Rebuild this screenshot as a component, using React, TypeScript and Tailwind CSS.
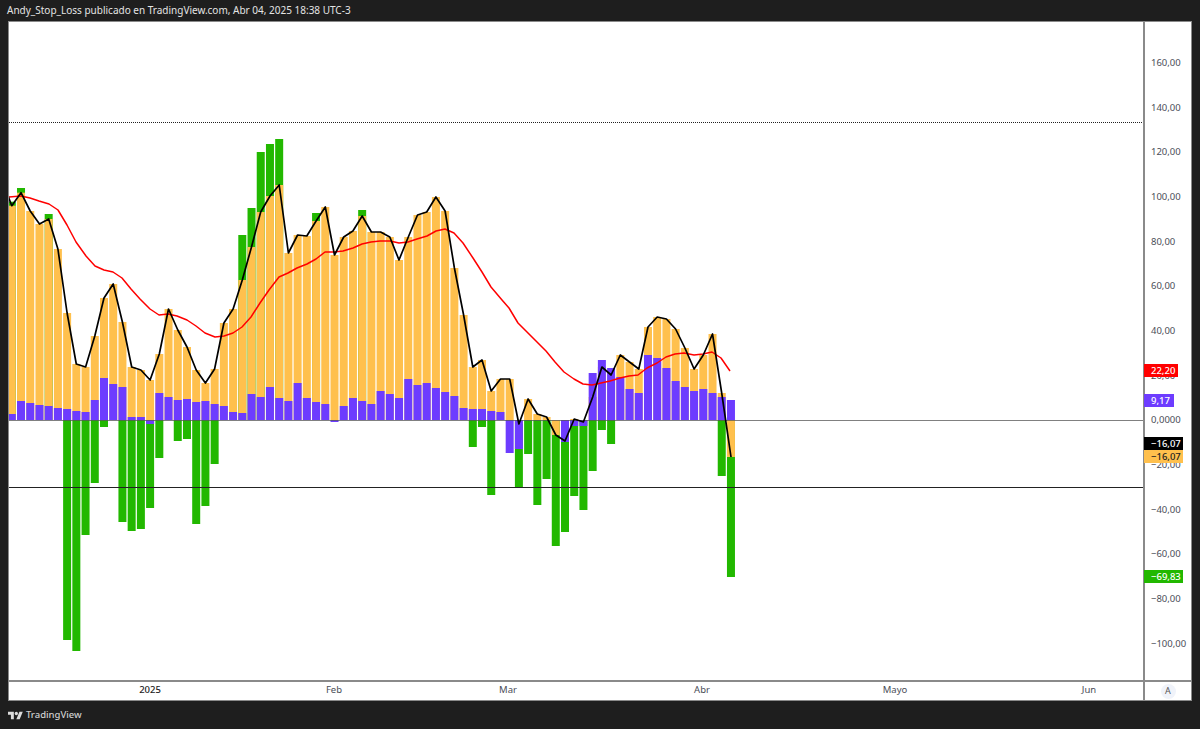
const ZERO = 420

// y pixel of each weekly bar, left to right
const orange = [
  205.7, 192.7, 211, 224, 219, 249, 313, 364, 367, 336,
  298, 284, 322, 367, 370, 380, 354, 309, 330, 347,
  370, 383, 369, 323, 309, 280, 247, 212, 196, 185,
  253, 235, 236, 221, 207, 255, 237, 231, 216, 232,
  232, 237, 260, 237, 215, 212, 197, 211, 268, 315,
  367, 360, 391, 379, 379, 424, 399, 414, 417, 435,
  441, 419, 422, 397, 367, 375, 355, 362, 369, 327,
  317, 319, 329, 348, 369, 355, 334, 393, 457,
]

const purple = [
  414, 401, 403, 405, 406, 408, 409, 411, 412, 400,
  378, 384, 387, 417, 417, 424, 393, 397, 400, 399,
  402, 401, 404, 406, 412, 413, 394, 397, 387, 398,
  401, 383, 398, 402, 404, 422, 406, 398, 401, 404,
  391, 394, 398, 379, 385, 383, 388, 392, 396, 408,
  409, 409, 411, 412, 453, 449, 420, 420, 420, 420,
  442, 426, 426, 373, 360, 368, 377, 389, 393, 355,
  358, 368, 381, 387, 391, 389, 393, 397, 400,
]

const green: Record<number, number> = {
  0: 201.7, 1: 188, 4: 214, 6: 640, 7: 651, 8: 535, 9: 483, 10: 427,
  12: 522, 13: 531, 14: 529, 15: 508, 16: 458, 18: 441, 19: 439, 20: 524,
  21: 506, 22: 464, 25: 235, 26: 208, 27: 152, 28: 144, 29: 139, 33: 213,
  38: 210, 50: 447, 51: 427, 52: 495, 55: 488, 56: 454, 57: 505, 58: 479,
  59: 546, 60: 532, 61: 496, 62: 510, 63: 471, 64: 430, 65: 444, 77: 476,
  78: 577,
}

const redLine =
  '8,197 21,196 30,198 39,201 49,204 58,210 67,225 76,242 86,256 95,266 104,270 113,272 122,278 131,289 140,299 150,309 159,315 168,314 177,316 187,320 196,326 205,333 215,337 224,336 233,333 242,327 251,317 260,303 269,290 279,277 288,273 297,268 307,264 316,259 325,252 334,252 343,251 353,248 362,244 371,242 380,241 390,241 399,243 408,242 417,239 427,236 436,231 445,229 454,233 463,243 473,258 482,272 491,287 502,300 509,308 518,323 527,332 537,342 546,351 555,362 564,372 574,379 583,384 592,385 601,383 610,381 620,378 629,376 638,375 647,368 657,363 666,357 675,354 684,353 694,355 703,354 712,352 721,358 730,371'

const barX = (i: number) => 11.8 + i * 9.22

const blackLine = '8,196 ' + orange.map((y, i) => `${barX(i).toFixed(1)},${y}`).join(' ')

const priceLabels = [
  '160,00', '140,00', '120,00', '100,00', '80,00', '60,00', '40,00', '20,00',
  '0,0000', '\u221220,00', '\u221240,00', '\u221260,00', '\u221280,00', '\u2212100,00',
]

function Bar({ i, y, color }: { i: number; y: number; color: string }) {
  return (
    <rect
      x={barX(i) - 4}
      y={Math.min(y, ZERO)}
      width={8}
      height={Math.abs(y - ZERO)}
      fill={color}
    />
  )
}

function Chart() {
  return (
    <svg viewBox="9 22 1134 658" className="block w-full h-full">
      {Object.entries(green).map(([i, y]) => (
        <Bar key={i} i={Number(i)} y={y} color="#22b800" />
      ))}
      {orange.map((y, i) => (
        <Bar key={i} i={i} y={y} color="#ffc04d" />
      ))}
      {purple.map((y, i) => (
        <Bar key={i} i={i} y={y} color="#6d3cff" />
      ))}
      <line x1="9" x2="1143" y1="122.5" y2="122.5" stroke="#222" strokeDasharray="1 1" />
      <line x1="9" x2="1143" y1="420.5" y2="420.5" stroke="#555" strokeOpacity="0.75" />
      <line x1="9" x2="1143" y1="487.5" y2="487.5" stroke="#222" />
      <polyline points={redLine} fill="none" stroke="#ff0000" strokeWidth="1.5" strokeLinejoin="round" />
      <polyline points={blackLine} fill="none" stroke="#000" strokeWidth="1.7" strokeLinejoin="round" />
    </svg>
  )
}

function Tag({ className, children }: { className: string; children: string }) {
  return (
    <div className={`absolute left-[-1px] h-[13px] leading-[13px] text-[9.5px] font-medium pl-[7px] ${className}`}>
      {children}
    </div>
  )
}

function PriceAxis() {
  return (
    <div className="relative w-[48px] border-l-2 border-[#8a8a8a] pt-[18.6px] text-[9.5px] text-[#4a4d57]">
      {priceLabels.map((label) => (
        <div key={label} className="h-[44.7px] flex items-center pl-[6px]">
          {label}
        </div>
      ))}
      <Tag className="top-[342px] w-[34px] bg-[#ff0000] text-white">22,20</Tag>
      <Tag className="top-[372px] w-[30px] bg-[#6d3cff] text-white">9,17</Tag>
      <Tag className="top-[415px] w-[39px] bg-black text-white">{'\u221216,07'}</Tag>
      <Tag className="top-[428px] w-[39px] bg-[#ffc04d] text-[#222]">{'\u221216,07'}</Tag>
      <Tag className="top-[548px] w-[39px] bg-[#22b800] text-white">{'\u221269,83'}</Tag>
    </div>
  )
}

function TimeAxis() {
  return (
    <div className="h-[20px] flex items-center border-t-2 border-[#8a8a8a] text-[9.5px] text-[#4a4d57]">
      <span className="w-[60px] text-center ml-[111px] mb-[1px] font-medium text-[#222]">2025</span>
      <span className="w-[60px] text-center ml-[124px] mb-[1px]">Feb</span>
      <span className="w-[60px] text-center ml-[114px] mb-[1px]">Mar</span>
      <span className="w-[60px] text-center ml-[134px] mb-[1px]">Abr</span>
      <span className="w-[60px] text-center ml-[133px] mb-[1px]">Mayo</span>
      <span className="w-[60px] text-center ml-[134px] mb-[1px]">Jun</span>
      <div className="ml-auto w-[48px] h-full flex items-center justify-center border-l-2 border-[#8a8a8a]">
        <span className="w-[15px] h-[15px] rounded-full bg-[#f0f3fa] flex items-center justify-center text-[9px] text-[#555]">
          A
        </span>
      </div>
    </div>
  )
}

export default function App() {
  return (
    <div className="w-[1200px] h-[729px] bg-[#1e1e1e] flex flex-col overflow-hidden font-['Noto_Sans',sans-serif]">
      <div className="h-[21px] pl-[7px] flex items-center text-[10px] text-[#e4e4e4]">
        Andy_Stop_Loss publicado en TradingView.com, Abr 04, 2025 18:38 UTC-3
      </div>
      <div className="mx-2 h-[680px] bg-white border border-[#8a8a8a] flex flex-col">
        <div className="h-[658px] flex">
          <div className="flex-1 min-w-0">
            <Chart />
          </div>
          <PriceAxis />
        </div>
        <TimeAxis />
      </div>
      <div className="flex-1 pl-2 flex items-center gap-[3px]">
        <svg viewBox="0 0 36 22" className="w-[15px] h-[9.5px]" fill="#dcdcdc">
          <path d="M14 22H7V11H0V4h14v18zM28 22h-8l7.5-18h8L28 22z" />
          <circle cx="20" cy="8" r="4" />
        </svg>
        <span className="text-[9.5px] font-medium text-[#cfcfcf]">TradingView</span>
      </div>
    </div>
  )
}
